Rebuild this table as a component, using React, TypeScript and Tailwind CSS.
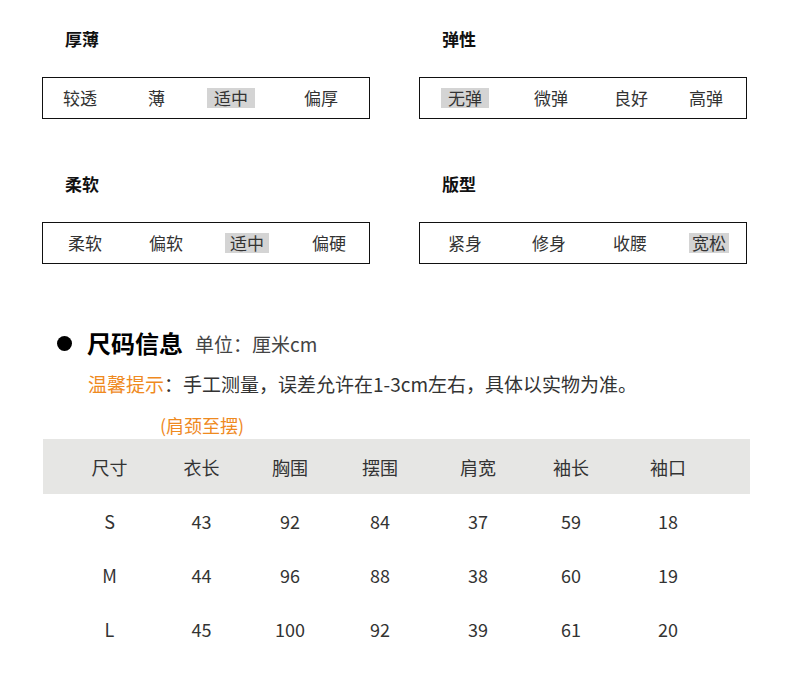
import React from "react";

type Item = { t: string; ml: number; hl?: boolean; px?: number };

const boxes: { title: string; items: Item[] }[][] = [
  [
    {
      title: "厚薄",
      items: [
        { t: "较透", ml: 20 },
        { t: "薄", ml: 51 },
        { t: "适中", ml: 42, hl: true, px: 7 },
        { t: "偏厚", ml: 49 },
      ],
    },
    {
      title: "弹性",
      items: [
        { t: "无弹", ml: 21, hl: true, px: 7 },
        { t: "微弹", ml: 45 },
        { t: "良好", ml: 46 },
        { t: "高弹", ml: 41 },
      ],
    },
  ],
  [
    {
      title: "柔软",
      items: [
        { t: "柔软", ml: 25 },
        { t: "偏软", ml: 47 },
        { t: "适中", ml: 42, hl: true, px: 5 },
        { t: "偏硬", ml: 43 },
      ],
    },
    {
      title: "版型",
      items: [
        { t: "紧身", ml: 28 },
        { t: "修身", ml: 50 },
        { t: "收腰", ml: 47 },
        { t: "宽松", ml: 42, hl: true, px: 3 },
      ],
    },
  ],
];

const header = ["尺寸", "衣长", "胸围", "摆围", "肩宽", "袖长", "袖口"];
const rows = [
  ["S", "43", "92", "84", "37", "59", "18"],
  ["M", "44", "96", "88", "38", "60", "19"],
  ["L", "45", "100", "92", "39", "61", "20"],
];

const cols = "grid grid-cols-[133px_51px_126px_54px_142px_44px_150px]";

function Box({ title, items }: { title: string; items: Item[] }) {
  return (
    <div className="w-[328px]">
      <div className="pl-[23px] text-[17px] leading-[24px] font-bold text-[#111]">{title}</div>
      <div className="mt-[26px] h-[42px] border border-[#111] flex items-center">
        {items.map((it, i) => (
          <div
            key={i}
            style={{ marginLeft: it.ml, paddingLeft: it.px ?? 0, paddingRight: it.px ?? 0 }}
            className={
              "text-[17px] leading-[20px] h-[20px] whitespace-nowrap text-[#333] " +
              (it.hl ? "bg-[#d4d4d4]" : "")
            }
          >
            {it.t}
          </div>
        ))}
      </div>
    </div>
  );
}

export default function App() {
  return (
    <div
      className="w-[790px] h-[694px] bg-white overflow-hidden"
      style={{ fontFamily: '"Noto Sans CJK SC", "Noto Sans", sans-serif' }}
    >
      <div className="pt-[27px] pl-[42px]">
        <div className="flex gap-[49px]">
          <Box {...boxes[0][0]} />
          <Box {...boxes[0][1]} />
        </div>
        <div className="flex gap-[49px] mt-[53px]">
          <Box {...boxes[1][0]} />
          <Box {...boxes[1][1]} />
        </div>
      </div>

      <div className="mt-[63px] pl-[57px] flex items-center h-[32px]">
        <div className="w-[15px] h-[15px] rounded-full bg-black" />
        <div className="ml-[15px] text-[24px] leading-[32px] font-bold text-black">尺码信息</div>
        <div className="ml-[12px] text-[19px] leading-[32px] text-[#444] mt-[2px]">单位：厘米cm</div>
      </div>

      <div className="mt-[12px] pl-[88px] text-[19px] leading-[26px] text-[#333]">
        <span className="text-[#ef8a1f]">温馨提示</span>：手工测量，误差允许在1-3cm左右，具体以实物为准。
      </div>

      <div className="mt-[16px] pl-[160px] text-[18px] leading-[24px] text-[#ef8a1f]">(肩颈至摆)</div>

      <div className="mt-[2px] ml-[43px] w-[707px]">
        <div className={cols + " h-[55px] bg-[#e6e6e4] items-center"}>
          {header.map((h, i) => (
            <div key={i} className="flex justify-center whitespace-nowrap text-[18px] leading-[24px] text-[#333]">
              {h}
            </div>
          ))}
        </div>
        {rows.map((r, ri) => (
          <div key={ri} className={cols + " h-[54px] items-center"}>
            {r.map((c, ci) => (
              <div key={ci} className="flex justify-center whitespace-nowrap text-[18px] leading-[24px] text-[#333]">
                {c}
              </div>
            ))}
          </div>
        ))}
      </div>
    </div>
  );
}
